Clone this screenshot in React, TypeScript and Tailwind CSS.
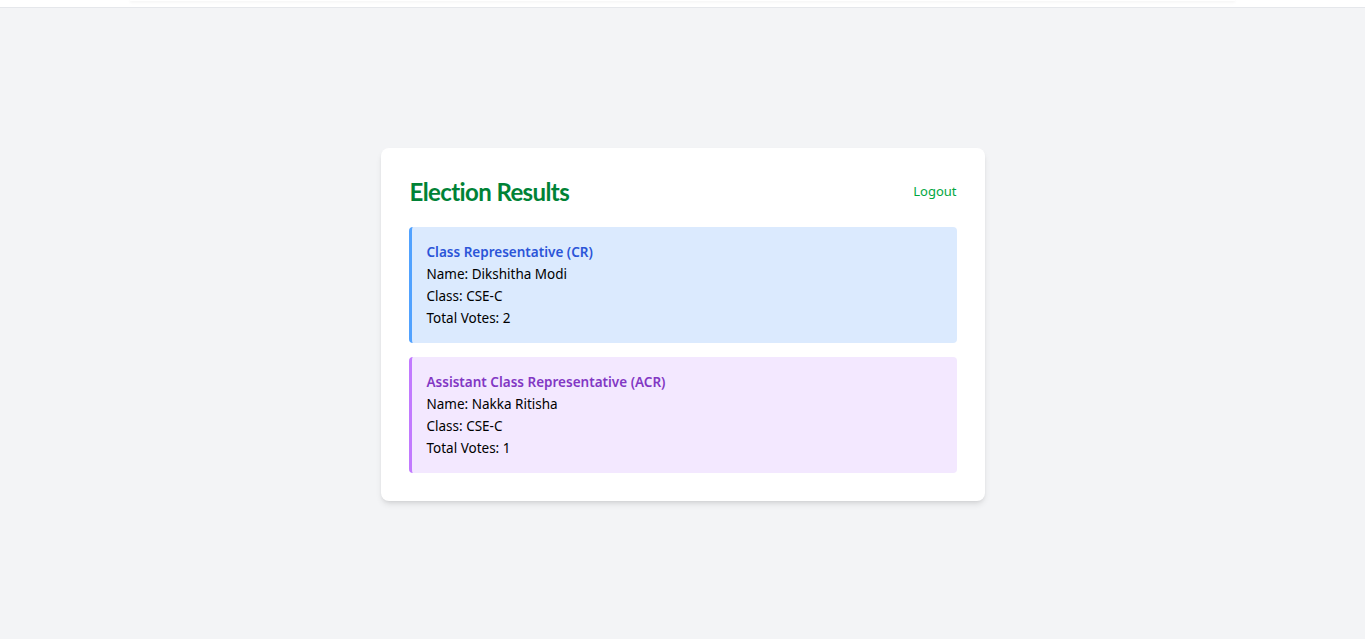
import React from "react";

interface Result {
  role: string;
  name: string;
  cls: string;
  votes: number;
  box: string;
  title: string;
}

const RESULTS: Result[] = [
  {
    role: "Class Representative (CR)",
    name: "Dikshitha Modi",
    cls: "CSE-C",
    votes: 2,
    box: "bg-blue-100 border-blue-400",
    title: "text-[#2b55d8]",
  },
  {
    role: "Assistant Class Representative (ACR)",
    name: "Nakka Ritisha",
    cls: "CSE-C",
    votes: 1,
    box: "bg-purple-100 border-purple-400",
    title: "text-[#8237c4]",
  },
];

export default function App() {
  return (
    <div
      className="min-h-screen flex flex-col bg-gray-100"
      style={{ fontFamily: '"Segoe UI", "Noto Sans", sans-serif' }}
    >
      {/* nav strip scrolled mostly out of view */}
      <div className="h-[8px] bg-white border-b border-gray-200 flex justify-center">
        <div className="w-[1105px] h-[1px] shadow-sm bg-white" />
      </div>

      <main className="flex-1 flex items-center justify-center pt-[2px]">
        <div className="w-[604px] bg-white rounded-lg shadow-md p-7">
          {/* Header */}
          <div className="flex items-center justify-between mb-[19px]">
            <h1
              className="text-2xl font-bold tracking-[-0.6px] text-green-700 pl-px"
              style={{ fontFamily: 'Lato, "Noto Sans", sans-serif' }}
            >
              Election Results
            </h1>
            <button className="text-[13px] text-green-600">Logout</button>
          </div>

          <div className="flex flex-col gap-[14px]">
            {RESULTS.map((r) => (
              <div
                key={r.role}
                className={`border-l-[3px] rounded pl-[15px] pr-4 py-[14px] text-[13.5px] leading-[22px] text-black ${r.box}`}
              >
                <p className={`font-semibold ${r.title}`}>{r.role}</p>
                <p>Name: {r.name}</p>
                <p>Class: {r.cls}</p>
                <p>Total Votes: {r.votes}</p>
              </div>
            ))}
          </div>
        </div>
      </main>
    </div>
  );
}
